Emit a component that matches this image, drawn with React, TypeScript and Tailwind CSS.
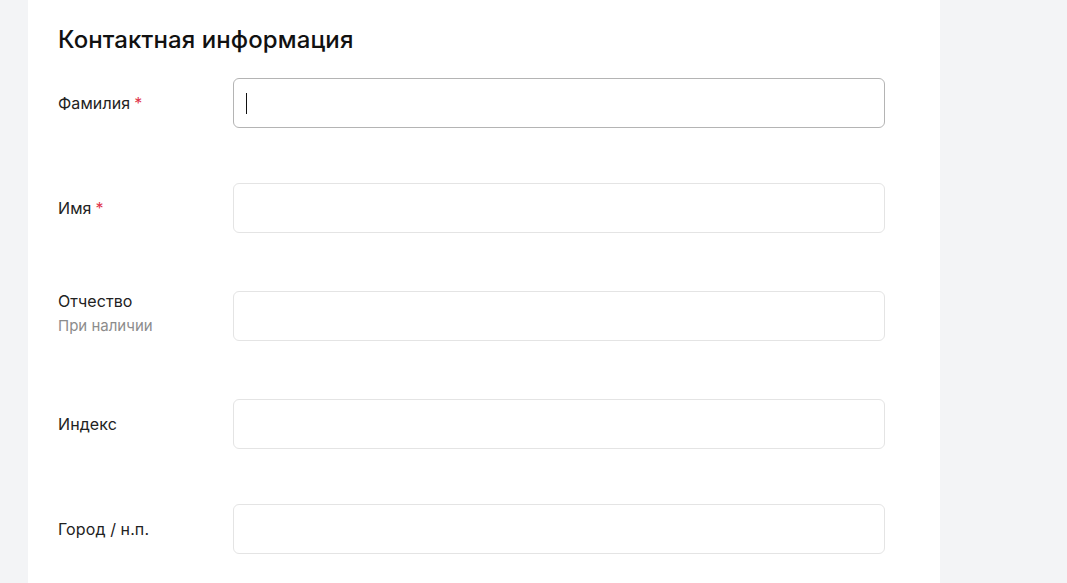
import React from 'react';

interface Field {
  label: string;
  required?: boolean;
  hint?: string;
  focused?: boolean;
  gap: string;
}

const fields: Field[] = [
  { label: 'Фамилия', required: true, focused: true, gap: 'mt-[23px]' },
  { label: 'Имя', required: true, gap: 'mt-[55px]' },
  { label: 'Отчество', hint: 'При наличии', gap: 'mt-[58px]' },
  { label: 'Индекс', gap: 'mt-[58px]' },
  { label: 'Город / н.п.', gap: 'mt-[55px]' },
];

const FormRow: React.FC<{ field: Field }> = ({ field }) => (
  <div className={`flex items-center ${field.gap}`}>
    <div className={`w-[175px] shrink-0 flex flex-col ${field.hint ? 'self-start' : ''}`}>
      <span className="text-[16px] leading-[20px] text-[#222222] tracking-[0.1px]">
        {field.label}
        {field.required && <span className="text-[#e0334a] ml-1">*</span>}
      </span>
      {field.hint && (
        <span className="text-[15px] leading-[20px] text-[#8c8c8c] mt-[5px]">{field.hint}</span>
      )}
    </div>
    <div
      className={`w-[652px] h-[50px] rounded-[6px] border bg-white flex items-center pl-[12px] ${
        field.focused ? 'border-[#b4b4b4]' : 'border-[#e4e4e4]'
      }`}
    >
      {field.focused && <span className="w-px h-[21px] bg-[#111111]" />}
    </div>
  </div>
);

export default function App() {
  return (
    <div
      className="w-[1067px] h-[583px] overflow-hidden bg-[#f3f4f6] pl-[28px]"
      style={{ fontFamily: 'Inter, "Noto Sans", sans-serif' }}
    >
      <div className="w-[912px] h-full bg-white pl-[30px] pt-[25px]">
        <h2 className="text-[24px] leading-[30px] font-medium text-[#111111] tracking-[0.1px]">
          Контактная информация
        </h2>
        {fields.map((f) => (
          <FormRow key={f.label} field={f} />
        ))}
      </div>
    </div>
  );
}
